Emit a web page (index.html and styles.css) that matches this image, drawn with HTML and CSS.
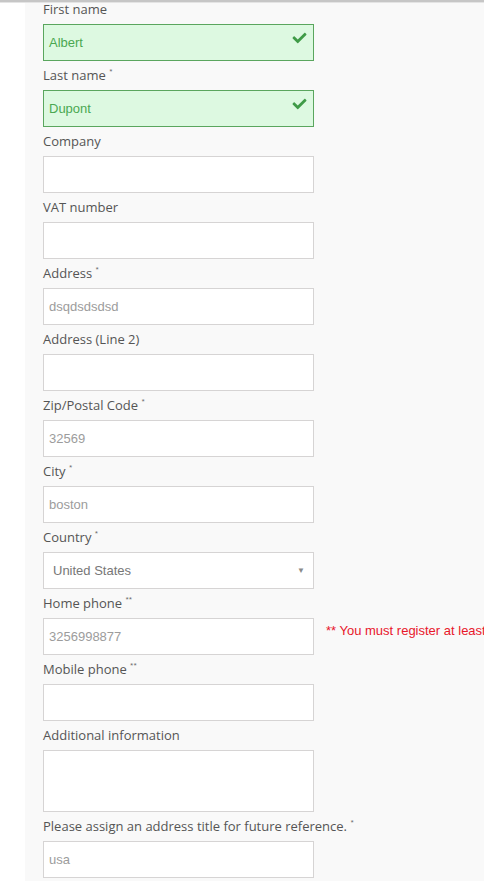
FILE: index.html
```html
<!DOCTYPE html>
<html>
<head>
<meta charset="utf-8">
<link rel="stylesheet" href="styles.css">
</head>
<body>
<div class="topbar"></div>
<div class="page">
  <div class="gutter"></div>
  <form class="form">
    <div class="field">
      <label class="label">First name</label>
      <div class="input-wrap">
        <div class="input valid">Albert</div>
        <svg class="check" viewBox="0 0 512 512"><path d="M173.898 439.404l-166.4-166.4c-9.997-9.997-9.997-26.206 0-36.204l36.203-36.204c9.997-9.998 26.207-9.998 36.204 0L192 312.69 432.095 72.596c9.997-9.997 26.207-9.997 36.204 0l36.203 36.204c9.997 9.997 9.997 26.206 0 36.204l-294.4 294.401c-9.998 9.997-26.207 9.997-36.204-.001z"/></svg>
      </div>
    </div>
    <div class="field">
      <label class="label">Last name <sup class="req">*</sup></label>
      <div class="input-wrap">
        <div class="input valid">Dupont</div>
        <svg class="check" viewBox="0 0 512 512"><path d="M173.898 439.404l-166.4-166.4c-9.997-9.997-9.997-26.206 0-36.204l36.203-36.204c9.997-9.998 26.207-9.998 36.204 0L192 312.69 432.095 72.596c9.997-9.997 26.207-9.997 36.204 0l36.203 36.204c9.997 9.997 9.997 26.206 0 36.204l-294.4 294.401c-9.998 9.997-26.207 9.997-36.204-.001z"/></svg>
      </div>
    </div>
    <div class="field">
      <label class="label">Company</label>
      <div class="input"></div>
    </div>
    <div class="field">
      <label class="label">VAT number</label>
      <div class="input"></div>
    </div>
    <div class="field">
      <label class="label">Address <sup class="req">*</sup></label>
      <div class="input">dsqdsdsdsd</div>
    </div>
    <div class="field">
      <label class="label">Address (Line 2)</label>
      <div class="input"></div>
    </div>
    <div class="field">
      <label class="label">Zip/Postal Code <sup class="req">*</sup></label>
      <div class="input">32569</div>
    </div>
    <div class="field">
      <label class="label">City <sup class="req">*</sup></label>
      <div class="input">boston</div>
    </div>
    <div class="field">
      <label class="label">Country <sup class="req">*</sup></label>
      <div class="input select"><span>United States</span><span class="arrow">▼</span></div>
    </div>
    <div class="field">
      <label class="label">Home phone <sup class="req">**</sup></label>
      <div class="row">
        <div class="input">3256998877</div>
        <span class="error">** You must register at least one phone number.</span>
      </div>
    </div>
    <div class="field">
      <label class="label">Mobile phone <sup class="req">**</sup></label>
      <div class="input"></div>
    </div>
    <div class="field">
      <label class="label">Additional information</label>
      <div class="input textarea"></div>
    </div>
    <div class="field">
      <label class="label">Please assign an address title for future reference. <sup class="req">*</sup></label>
      <div class="input">usa</div>
    </div>
  </form>
</div>
</body>
</html>
```
FILE: styles.css
```css
html, body {
  margin: 0;
  padding: 0;
  background: #ffffff;
  overflow: hidden;
}
body {
  width: 484px;
  height: 881px;
}
.topbar {
  position: relative;
  z-index: 1;
  height: 2px;
  background: #c6c6c6;
  border-bottom: 1px solid #e4e4e4;
}
.page {
  display: flex;
  margin-top: -8px;
  min-height: 900px;
}
.gutter {
  width: 25px;
  flex: none;
  background: #ffffff;
}
.form {
  flex: 1;
  min-width: 0;
  background: #f9f9f9;
  padding-left: 18px;
  overflow: hidden;
}
.field {
  display: flex;
  flex-direction: column;
  padding-top: 4px;
}
.label {
  display: block;
  font-family: "Open Sans", "Lato", sans-serif;
  font-size: 13px;
  line-height: 20px;
  height: 20px;
  margin-bottom: 5px;
  color: #555555;
  white-space: nowrap;
}
.req {
  font-size: 6px;
  vertical-align: 7px;
  line-height: 0;
  color: #555;
}
.input-wrap {
  position: relative;
  width: 271px;
}
.input {
  box-sizing: border-box;
  width: 271px;
  height: 37px;
  flex: none;
  background: #ffffff;
  border: 1px solid #d6d4d4;
  padding: 0 5px;
  font-family: "Liberation Sans", Arial, sans-serif;
  font-size: 13px;
  line-height: 35px;
  color: #9c9c9c;
}
.input.valid {
  background: #ddf9e1;
  border-color: #5aa65e;
  color: #4aa851;
}
.check {
  position: absolute;
  right: 6px;
  top: 7px;
  width: 17px;
  height: 14px;
  fill: #3f9b47;
}
.select {
  display: flex;
  justify-content: space-between;
  padding: 0 8px 0 9px;
  color: #777777;
}
.arrow {
  font-size: 8px;
  color: #8a8a8a;
}
.textarea {
  height: 62px;
}
.row {
  display: flex;
  align-items: flex-start;
  white-space: nowrap;
}
.error {
  margin-top: 5px;
  margin-left: 12px;
  font-family: "Liberation Sans", Arial, sans-serif;
  font-size: 13px;
  line-height: 16px;
  color: #e8172b;
}
```
